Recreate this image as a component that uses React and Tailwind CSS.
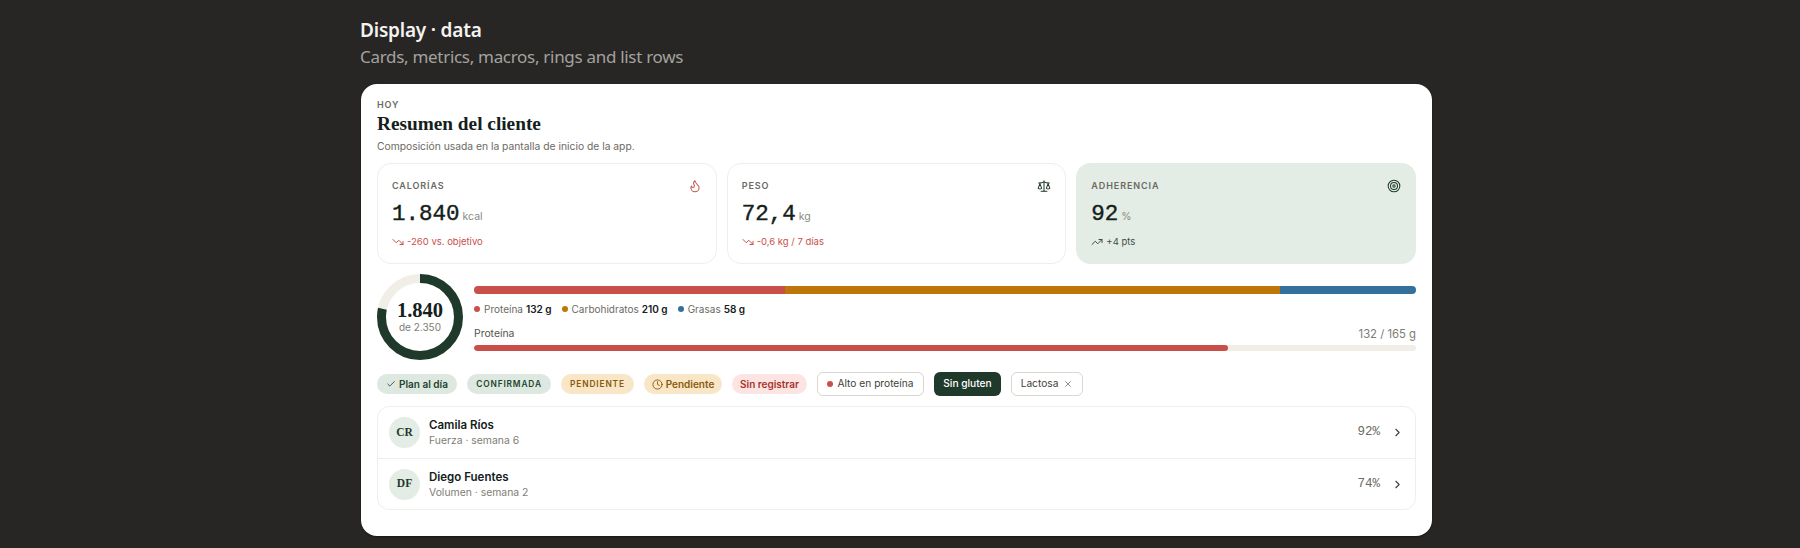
import React from 'react';
import { Flame, Scale, Target, TrendingDown, TrendingUp, Check, Clock, X, ChevronRight } from 'lucide-react';

const metrics = [
  { label: 'CALORÍAS', value: '1.840', unit: 'kcal', delta: '-260 vs. objetivo', Icon: Flame, iconColor: 'text-[#c9504a]', down: true },
  { label: 'PESO', value: '72,4', unit: 'kg', delta: '-0,6 kg / 7 días', Icon: Scale, iconColor: 'text-[#1f3a2b]', down: true },
  { label: 'ADHERENCIA', value: '92', unit: '%', delta: '+4 pts', Icon: Target, iconColor: 'text-[#1f3a2b]', down: false, soft: true },
];

const clients = [
  { initials: 'CR', name: 'Camila Ríos', sub: 'Fuerza · semana 6', pct: '92%' },
  { initials: 'DF', name: 'Diego Fuentes', sub: 'Volumen · semana 2', pct: '74%' },
];

const MetricCard = ({ label, value, unit, delta, Icon, iconColor, down, soft }) => {
  const Trend = down ? TrendingDown : TrendingUp;
  return (
    <div className={`flex-1 h-[101px] rounded-[14px] border pl-[14px] pr-[14px] pt-[14px] ${soft ? 'bg-[#e3ede5] border-[#e3ede5]' : 'bg-white border-[#f1eee8]'}`}>
      <div className="flex items-start justify-between">
        <span className="text-[9px] leading-[15px] font-semibold tracking-[0.1em] text-[#6b6a63]">{label}</span>
        <Icon size={14} className={`${iconColor} mt-[1px]`} strokeWidth={1.75} />
      </div>
      <div className="mt-[5px] flex items-baseline gap-[3px]">
        <span className="font-['Liberation_Mono'] text-[22.5px] leading-[32px] text-[#14201a] [-webkit-text-stroke:0.4px_#14201a]">{value}</span>
        <span className="text-[10.5px] text-[#8a8982]">{unit}</span>
      </div>
      <div className={`mt-[5px] flex items-center gap-[3px] text-[9.5px] leading-[14px] ${soft ? 'text-[#3d4f45]' : 'text-[#c9504a]'}`}>
        <Trend size={12} strokeWidth={2} />
        <span>{delta}</span>
      </div>
    </div>
  );
};

const Ring = () => {
  const r = 38.5;
  const c = 2 * Math.PI * r;
  return (
    <div className="relative w-[86px] h-[86px] shrink-0">
      <svg width="86" height="86" viewBox="0 0 86 86" className="-rotate-90">
        <circle cx="43" cy="43" r={r} fill="none" stroke="#f1eee8" strokeWidth="9" />
        <circle cx="43" cy="43" r={r} fill="none" stroke="#1f3a2b" strokeWidth="9" strokeDasharray={`${c * 0.783} ${c}`} />
      </svg>
      <div className="absolute inset-0 flex flex-col items-center justify-center">
        <span className="font-['Liberation_Serif'] font-bold text-[20.5px] leading-[20px] text-[#14201a]">1.840</span>
        <span className="text-[10px] leading-[15px] text-[#7d7c75]">de 2.350</span>
      </div>
    </div>
  );
};

const LegendItem = ({ color, name, value }) => (
  <span className="flex items-center gap-[3px] text-[10px] leading-[14px] text-[#6b6a63]">
    <span className={`w-[6px] h-[6px] mr-[1px] rounded-full ${color}`} />
    {name}
    <b className="font-semibold text-[#14201a]">{value}</b>
  </span>
);

const Pill = ({ className, children }) => (
  <span className={`flex items-center justify-center h-5 rounded-full font-semibold ${className}`}>{children}</span>
);

const App = () => {
  return (
    <div className="min-h-[548px] bg-[#272624] font-['Inter',sans-serif] pl-[360px] pt-[16px]">
      <h1 className="font-['Noto_Sans',sans-serif] text-[19px] leading-[28px] font-semibold tracking-[-0.2px] text-[#f4f3f0]">Display · data</h1>
      <p className="font-['Noto_Sans',sans-serif] text-[17px] leading-[28px] tracking-[-0.3px] text-[#a3a29e] mt-[-1px]">Cards, metrics, macros, rings and list rows</p>
      <div className="ml-[1px] w-[1071px] h-[452px] mt-[13px] bg-white rounded-[16px] px-[16px] pt-[14px] shadow-[0_1px_2px_rgba(0,0,0,0.4)]">
        <div className="text-[9px] leading-[14px] font-semibold tracking-[0.1em] text-[#6b6a63]">HOY</div>
        <h2 className="font-['Liberation_Serif',serif] font-bold text-[19.3px] leading-[24px] text-[#14201a]">Resumen del cliente</h2>
        <p className="text-[10.3px] leading-[16px] text-[#6b6a63] mt-[2px]">Composición usada en la pantalla de inicio de la app.</p>

        <div className="flex gap-[10px] mt-[9px]">
          {metrics.map(m => <MetricCard key={m.label} {...m} />)}
        </div>

        <div className="flex gap-[11px] mt-[10px]">
          <Ring />
          <div className="flex-1 pt-[12px]">
            <div className="flex h-2 rounded-full overflow-hidden">
              <div className="w-[33%] bg-[#c9504a]" />
              <div className="w-[52.6%] bg-[#bd7609]" />
              <div className="flex-1 bg-[#33719c]" />
            </div>
            <div className="flex gap-[10px] mt-[8px]">
              <LegendItem color="bg-[#c9504a]" name="Proteína" value="132 g" />
              <LegendItem color="bg-[#bd7609]" name="Carbohidratos" value="210 g" />
              <LegendItem color="bg-[#33719c]" name="Grasas" value="58 g" />
            </div>
            <div className="flex justify-between text-[10.4px] leading-[16px] text-[#55544e] mt-[10px]">
              <span>Proteína</span>
              <span className="text-[11.3px] text-[#7d7c75]">132 / 165 g</span>
            </div>
            <div className="h-[6px] mt-[3px] rounded-full bg-[#f1eee8] overflow-hidden">
              <div className="h-full w-[80%] rounded-full bg-[#c9504a]" />
            </div>
          </div>
        </div>

        <div className="flex items-center gap-[10px] mt-[12px] h-6">
          <Pill className="w-[80px] gap-[3px] bg-[#dde9e0] text-[#24432f] text-[10px]"><Check size={10} strokeWidth={2} />Plan al día</Pill>
          <Pill className="w-[84px] bg-[#dde9e0] text-[#24432f] text-[8.4px] tracking-[0.1em]">CONFIRMADA</Pill>
          <Pill className="w-[73px] bg-[#f8e6c6] text-[#8a5a0c] text-[8.4px] tracking-[0.1em]">PENDIENTE</Pill>
          <Pill className="w-[78px] gap-[3px] bg-[#f8e6c6] text-[#8a5a0c] text-[10px]"><Clock size={11} strokeWidth={2} />Pendiente</Pill>
          <Pill className="w-[75px] bg-[#fbe4e2] text-[#a8322d] text-[10px]">Sin registrar</Pill>
          <span className="flex items-center justify-center gap-[4px] w-[107px] h-6 rounded-[6px] border border-[#d8d6cf] text-[10.2px] text-[#3f3e39]">
            <span className="w-[6px] h-[6px] rounded-full bg-[#c9504a]" />Alto en proteína
          </span>
          <span className="flex items-center justify-center w-[67px] h-6 rounded-[6px] bg-[#1f3a2b] text-[10.2px] font-medium text-white">Sin gluten</span>
          <span className="flex items-center justify-center gap-[5px] w-[72px] h-6 rounded-[6px] border border-[#d8d6cf] text-[10.2px] text-[#3f3e39]">
            Lactosa<X size={10} className="text-[#7d7c75]" />
          </span>
        </div>

        <div className="mt-[10px] rounded-[12px] border border-[#f1eee8]">
          {clients.map((c, i) => (
            <div key={c.initials} className={`flex items-center h-[51px] pl-[11px] pr-[11px] ${i > 0 ? 'border-t border-[#f1eee8]' : ''}`}>
              <div className="w-[31px] h-[31px] rounded-full bg-[#e3ede5] flex items-center justify-center font-['Liberation_Serif'] font-bold text-[11.5px] text-[#1f3a2b]">
                {c.initials}
              </div>
              <div className="ml-[9px] flex-1 pt-[1px]">
                <p className="text-[11.5px] leading-[16px] font-semibold text-[#14201a]">{c.name}</p>
                <p className="text-[10.4px] leading-[16px] text-[#7d7c75]">{c.sub}</p>
              </div>
              <span className="font-['Liberation_Mono'] text-[12.5px] text-[#6b6a63]">{c.pct}</span>
              <ChevronRight size={13} className="ml-[11px] text-[#3f3e39]" />
            </div>
          ))}
        </div>
      </div>
    </div>
  );
};

export default App;
